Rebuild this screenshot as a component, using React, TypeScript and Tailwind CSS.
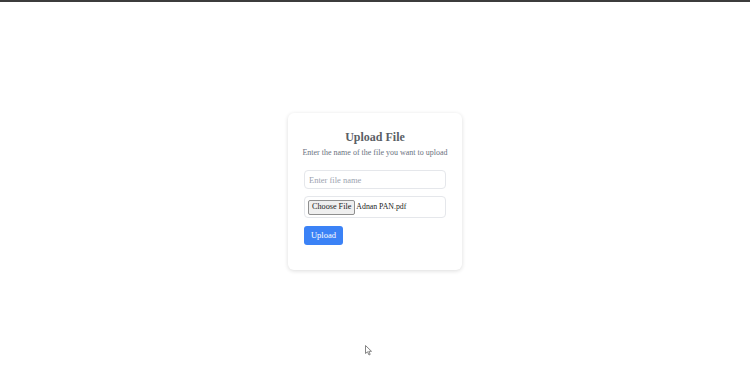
import React from 'react';

function Cursor() {
  return (
    <svg className="absolute left-[365px] top-[343px]" width="8" height="11" viewBox="0 0 8 11">
      <path d="M0.5 0.5 L0.5 8.5 L2.5 6.8 L4 10 L5.2 9.4 L3.8 6.3 L6.5 6.3 Z" fill="#fff" stroke="#777" strokeWidth="0.9" />
    </svg>
  );
}

export default function App() {
  return (
    <div className="relative flex h-[382px] items-center justify-center border-t-[2px] border-[#3c3c3c] bg-white font-['Liberation_Serif',serif]">
      <div className="-mt-[1px] w-[174px] rounded-md bg-white px-4 pt-[16px] pb-[25px] shadow-[0_1px_4px_rgba(0,0,0,0.14)]">
        <h1 className="text-center text-[12px] font-bold leading-[16px] text-[#5b5f66]">Upload File</h1>
        <p className="-mx-2 mt-[2px] whitespace-nowrap text-center text-[8px] leading-[12px] text-[#6b7280]">Enter the name of the file you want to upload</p>
        <input
          type="text"
          placeholder="Enter file name"
          className="mt-[11px] block h-[19px] w-full rounded-[4px] border border-[#e5e7eb] px-[4px] text-[8.5px] outline-none placeholder:text-[#9ca3af]"
        />
        <div className="mt-[7px] flex h-[22px] items-center gap-[1px] rounded-[4px] border border-[#e5e7eb] px-[3px]">
          <span className="flex h-[15px] items-center rounded-[2px] border border-[#8f8f8f] bg-[#efefef] px-[3px] text-[8.2px] text-[#222]">Choose File</span>
          <span className="text-[7.8px] text-[#222]">Adnan PAN.pdf</span>
        </div>
        <button className="mt-[8px] flex h-[19px] w-[39px] items-center justify-center rounded-[3px] bg-[#3b82f6] text-[8.5px] text-white">Upload</button>
      </div>
      <Cursor />
    </div>
  );
}
